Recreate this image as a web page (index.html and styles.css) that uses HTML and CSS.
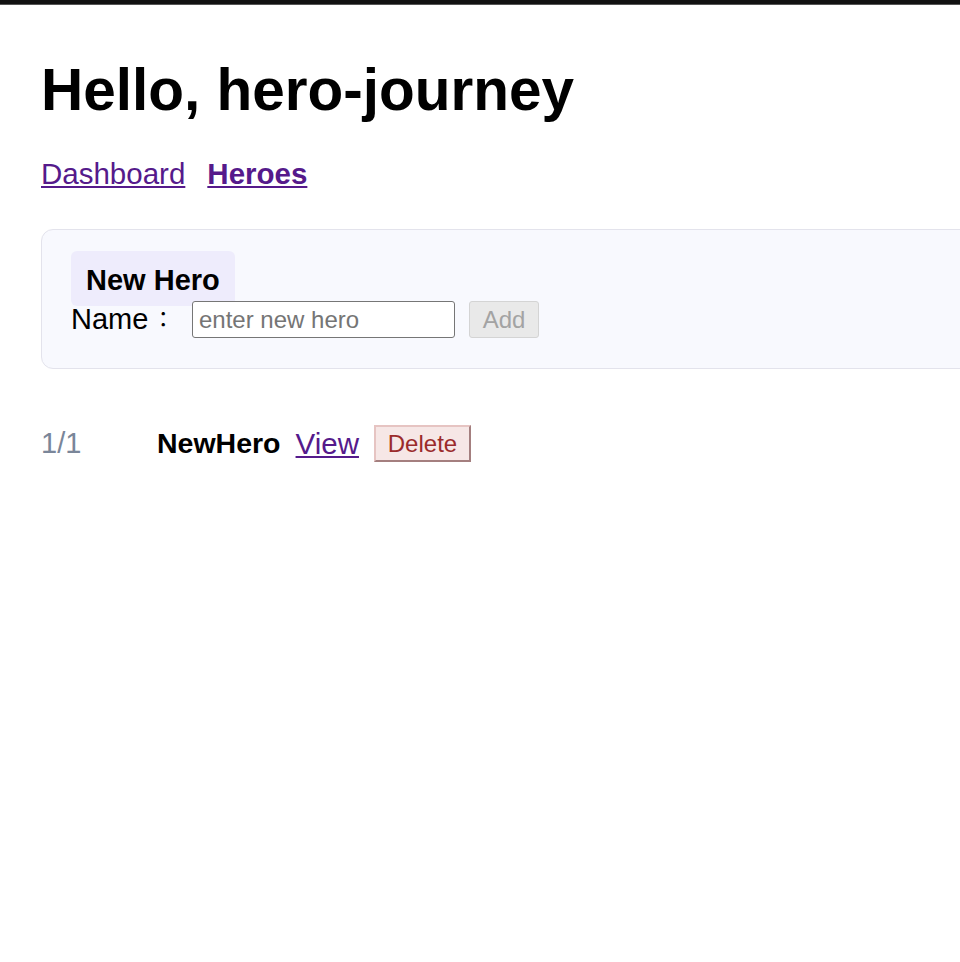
FILE: index.html
```html
<!DOCTYPE html>
<html>
<head>
  <meta charset="UTF-8">
  <meta name="viewport" content="width=device-width, initial-scale=1.0">
  <title>Hero Journey</title>
  <link rel="stylesheet" href="styles.css">
</head>
<body>
  <div class="topbar"></div>
  <div class="app">
    <h1>Hello, hero-journey</h1>
    <nav class="nav">
      <a href="#dashboard">Dashboard</a>
      <a href="#heroes" class="active">Heroes</a>
    </nav>

    <div class="card">
      <div class="card-title">New Hero</div>
      <div class="add-row">
        <label for="heroName">Name<span class="colon">：</span></label>
        <input id="heroName" type="text" placeholder="enter new hero">
        <button class="add-btn" disabled>Add</button>
      </div>
    </div>

    <ul class="hero-list">
      <li class="hero-row">
        <span class="count">1/1</span>
        <span class="hero-name">NewHero</span>
        <a href="#detail">View</a>
        <button class="delete-btn">Delete</button>
      </li>
    </ul>
  </div>
</body>
</html>
```

FILE: styles.css
```css
html, body {
  margin: 0;
  overflow-x: hidden;
}

body {
  background: #fff;
  color: #000;
  font-family: "Liberation Sans", "Noto Sans CJK TC", sans-serif;
}

a {
  color: #551a8b;
}

.topbar {
  height: 4px;
  background: #111;
  border-bottom: 1px solid #555;
}

.app {
  padding: 51px 0 0 41px;
}

h1 {
  font-size: 58.5px;
  line-height: 67px;
  font-weight: bold;
  margin: 0;
}

.nav {
  display: flex;
  gap: 22px;
  margin-top: 34px;
  font-size: 29.5px;
  line-height: 33px;
}
.nav .active {
  font-weight: bold;
}

.card {
  margin: 39px -80px 0 0;
  padding: 21px 30px 30px 29px;
  background: #f8f9fe;
  border: 1px solid #e3e3ec;
  border-radius: 12px;
}

.card-title {
  display: inline-block;
  background: #eeecfc;
  border-radius: 6px;
  padding: 13px 15px 10px 15px;
  font-size: 29px;
  line-height: 32px;
  font-weight: bold;
  margin-bottom: -5px;
}

.add-row {
  display: flex;
  align-items: center;
}
.add-row label {
  font-size: 29px;
  line-height: 37px;
  width: 121px;
}
.add-row .colon {
  font-size: 22px;
  margin-left: 4px;
  vertical-align: 2px;
}
.add-row input {
  box-sizing: border-box;
  width: 263px;
  height: 37px;
  padding: 0 6px;
  border: 1px solid #767676;
  border-radius: 3px;
  font-family: inherit;
  font-size: 24px;
  background: #fff;
}
.add-row input::placeholder {
  color: #757575;
}
.add-btn {
  box-sizing: border-box;
  margin-left: 14px;
  height: 37px;
  width: 70px;
  padding: 0;
  background: #e9e9e9;
  border: 1px solid #d4d4d4;
  border-radius: 3px;
  font-family: inherit;
  font-size: 24px;
  color: #a3a3a3;
}

.hero-list {
  list-style: none;
  margin: 56px 0 0 0;
  padding: 0;
}
.hero-row {
  display: flex;
  align-items: center;
  gap: 15px;
  font-size: 28.5px;
}
.count {
  min-width: 101px;
  color: #7a8699;
  font-size: 29px;
}
.hero-name {
  font-weight: bold;
}
.hero-row a {
  font-size: 29.5px;
}
.delete-btn {
  box-sizing: border-box;
  height: 37px;
  width: 97px;
  padding: 0;
  background: #f6e7e6;
  color: #9b2b2b;
  font-family: inherit;
  font-size: 24px;
  border: 2px solid;
  border-color: #e6c4c2 #a47f7f #a47f7f #e6c4c2;
}
```
